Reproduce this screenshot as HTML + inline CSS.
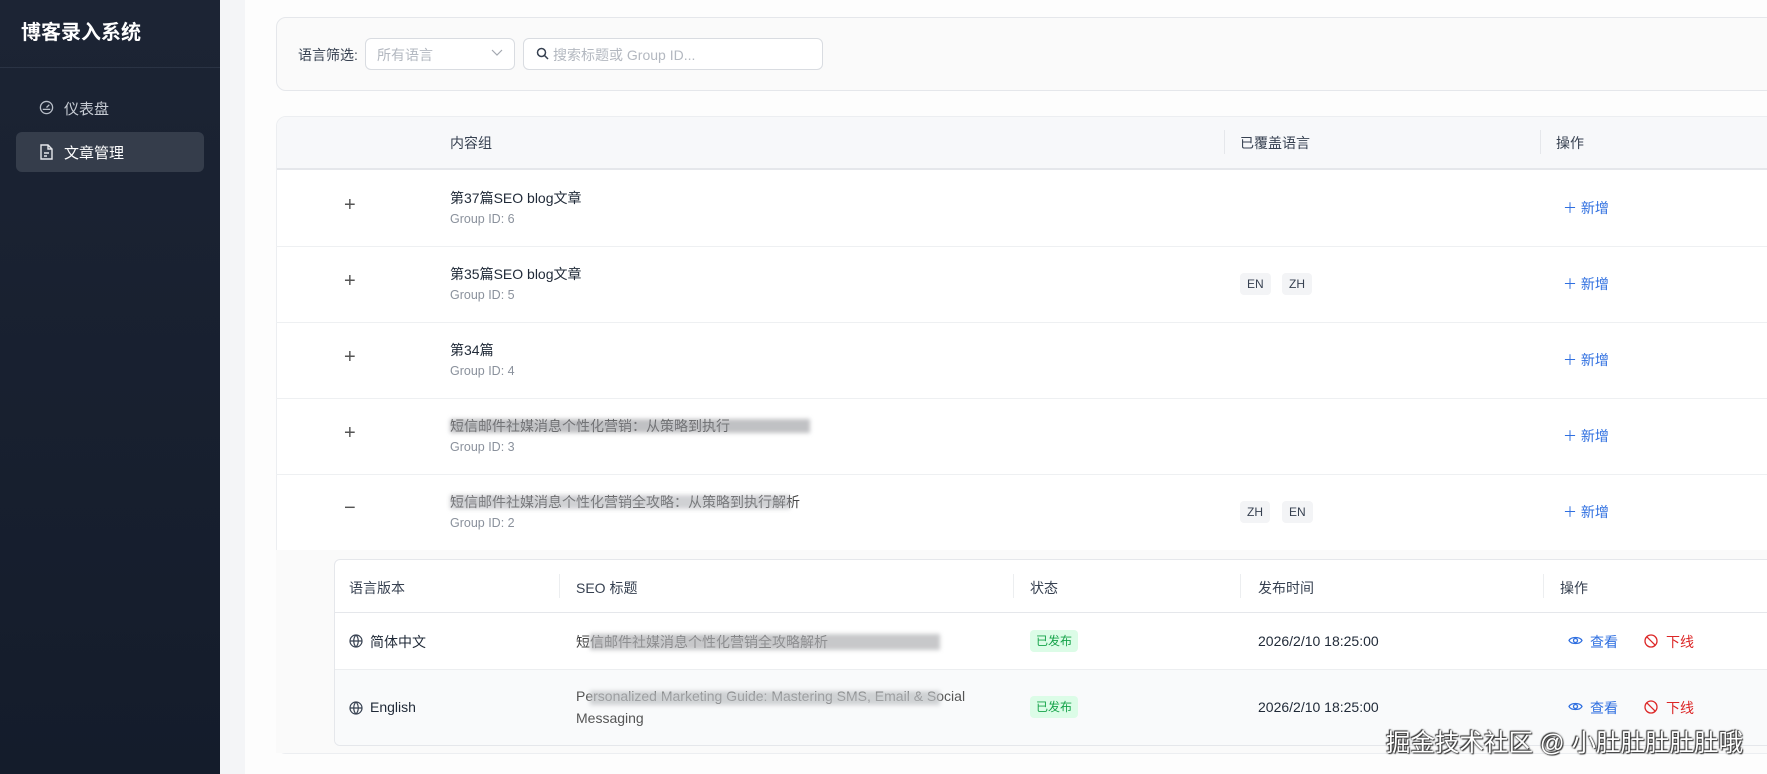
<!DOCTYPE html>
<html><head><meta charset="utf-8"><style>
*{box-sizing:border-box;margin:0;padding:0}
body{width:1767px;height:774px;overflow:hidden;font-family:"Liberation Sans","Noto Sans CJK SC",sans-serif;background:#fff;position:relative;color:#1f2937;font-size:14px}
.abs{position:absolute}
.side{left:0;top:0;width:220px;height:774px;background:linear-gradient(#1c2434,#141c2b)}
.strip{left:220px;top:0;width:25px;height:774px;background:#f4f5f7}
.main{left:245px;top:0;width:1522px;height:774px;background:#fdfdfd}
.t{white-space:nowrap}
.gray{color:#8a919c;font-size:12.5px}
.tag{position:absolute;height:22px;padding:0 7px;line-height:22px;font-size:12px;background:#f3f4f6;border-radius:4px;color:#374151}
.add{color:#2f6fe0;font-size:14px}
.pub{position:absolute;background:#dcfce7;color:#16a34a;font-size:12px;padding:0 6px;height:22px;line-height:22px;border-radius:4px}
.blur{position:absolute;background:#d8d9db;height:14px;filter:blur(2px)}
.pl{position:absolute;font-size:20px;color:#555;font-weight:300}
</style></head><body>
<div class="abs side"></div>
<div class="abs t" style="left:21px;top:16px;color:#fff;font-size:20px;font-weight:bold">博客录入系统</div>
<div class="abs" style="left:0;top:67px;width:220px;height:1px;background:#2a3344"></div>
<svg class="abs" style="left:39px;top:100px" width="15" height="15" viewBox="0 0 16 16" fill="none" stroke="#b8bec8" stroke-width="1.4"><circle cx="8" cy="8" r="6.5"/><path d="M8 8l3-3M4 10h8"/></svg>
<div class="abs t" style="left:64px;top:98px;color:#c7ccd4;font-size:15px">仪表盘</div>
<div class="abs" style="left:16px;top:132px;width:188px;height:40px;background:#353d4b;border-radius:6px"></div>
<svg class="abs" style="left:40px;top:144px" width="13" height="16" viewBox="0 0 13 16" fill="none" stroke="#e5e7eb" stroke-width="1.4"><path d="M1 1h7l4 4v10H1z M8 1v4h4 M4 9h5M4 12h3"/></svg>
<div class="abs t" style="left:64px;top:142px;color:#fff;font-size:15px">文章管理</div>
<div class="abs strip"></div>
<div class="abs main"></div>
<div class="abs" style="left:276px;top:17px;width:1500px;height:74px;background:#fafafa;border:1px solid #e5e7eb;border-radius:10px"></div>
<div class="abs t" style="left:298px;top:45px;font-size:14px;color:#374151">语言筛选:</div>
<div class="abs" style="left:365px;top:38px;width:150px;height:32px;border:1px solid #d9dce1;border-radius:6px;background:#fff"></div>
<div class="abs t" style="left:377px;top:45px;color:#b3b8c0;font-size:14px">所有语言</div>
<svg class="abs" style="left:491px;top:49px" width="12" height="8" viewBox="0 0 12 8" fill="none" stroke="#a3a8b0" stroke-width="1.2"><path d="M1 1l5 5 5-5"/></svg>
<div class="abs" style="left:523px;top:38px;width:300px;height:32px;border:1px solid #d9dce1;border-radius:6px;background:#fff"></div>
<svg class="abs" style="left:536px;top:47px" width="13" height="13" viewBox="0 0 13 13" fill="none" stroke="#374151" stroke-width="1.5"><circle cx="5.5" cy="5.5" r="4"/><path d="M8.5 8.5l3.5 3.5"/></svg>
<div class="abs t" style="left:553px;top:45px;color:#b3b8c0;font-size:14px">搜索标题或 Group ID...</div>

<div class="abs" style="left:276px;top:116px;width:1500px;height:638px;background:#fff;border:1px solid #eceef1;border-radius:10px;overflow:hidden">
 <div class="abs" style="left:0;top:0;width:1500px;height:53px;background:#f7f8fa;border-bottom:2px solid #e5e7eb"></div>
</div>
<div class="abs t" style="left:450px;top:133px;font-size:14px;color:#374151">内容组</div>
<div class="abs" style="left:1224px;top:130px;width:1px;height:24px;background:#e5e7eb"></div>
<div class="abs t" style="left:1240px;top:133px;font-size:14px;color:#374151">已覆盖语言</div>
<div class="abs" style="left:1540px;top:130px;width:1px;height:24px;background:#e5e7eb"></div>
<div class="abs t" style="left:1556px;top:133px;font-size:14px;color:#374151">操作</div>

<div class="abs" style="left:276px;top:246px;width:1491px;height:1px;background:#eef0f2"></div>
<div class="abs" style="left:276px;top:322px;width:1491px;height:1px;background:#eef0f2"></div>
<div class="abs" style="left:276px;top:398px;width:1491px;height:1px;background:#eef0f2"></div>
<div class="abs" style="left:276px;top:474px;width:1491px;height:1px;background:#eef0f2"></div>
<div class="abs" style="left:276px;top:550px;width:1491px;height:1px;background:#eef0f2"></div>

<div class="pl t" style="left:344px;top:194px">+</div>
<div class="abs t" style="left:450px;top:188px">第37篇SEO blog文章</div>
<div class="abs t gray" style="left:450px;top:212px">Group ID: 6</div>
<div class="abs t add" style="left:1563px;top:198px">＋ 新增</div>

<div class="pl t" style="left:344px;top:270px">+</div>
<div class="abs t" style="left:450px;top:264px">第35篇SEO blog文章</div>
<div class="abs t gray" style="left:450px;top:288px">Group ID: 5</div>
<div class="tag" style="left:1240px;top:273px">EN</div><div class="tag" style="left:1282px;top:273px">ZH</div>
<div class="abs t add" style="left:1563px;top:274px">＋ 新增</div>

<div class="pl t" style="left:344px;top:346px">+</div>
<div class="abs t" style="left:450px;top:340px">第34篇</div>
<div class="abs t gray" style="left:450px;top:364px">Group ID: 4</div>
<div class="abs t add" style="left:1563px;top:350px">＋ 新增</div>

<div class="pl t" style="left:344px;top:422px">+</div>
<div class="abs t" style="left:450px;top:416px;color:#444">短信邮件社媒消息个性化营销：从策略到执行</div>
<div class="blur" style="left:450px;top:419px;width:360px;background:rgba(150,152,156,.6)"></div>
<div class="abs t gray" style="left:450px;top:440px">Group ID: 3</div>
<div class="abs t add" style="left:1563px;top:426px">＋ 新增</div>

<div class="pl t" style="left:344px;top:497px">−</div>
<div class="abs t" style="left:450px;top:492px;color:#444">短信邮件社媒消息个性化营销全攻略：从策略到执行解析</div>
<div class="blur" style="left:450px;top:495px;width:340px;background:rgba(170,172,176,.55)"></div>
<div class="abs t gray" style="left:450px;top:516px">Group ID: 2</div>
<div class="tag" style="left:1240px;top:501px">ZH</div><div class="tag" style="left:1282px;top:501px">EN</div>
<div class="abs t add" style="left:1563px;top:502px">＋ 新增</div>

<div class="abs" style="left:276px;top:550px;width:1491px;height:203px;background:#fafafa"></div>
<div class="abs" style="left:334px;top:559px;width:1440px;height:187px;background:#fff;border:1px solid #e5e7eb;border-radius:6px;overflow:hidden">
 <div class="abs" style="left:0;top:52px;width:1440px;height:1px;background:#e5e7eb"></div>
 <div class="abs" style="left:0;top:109px;width:1440px;height:77px;background:#f9fafb;border-top:1px solid #eceef0"></div>
</div>
<div class="abs" style="left:559px;top:574px;width:1px;height:24px;background:#eceef0"></div>
<div class="abs" style="left:1013px;top:574px;width:1px;height:24px;background:#eceef0"></div>
<div class="abs" style="left:1240px;top:574px;width:1px;height:24px;background:#eceef0"></div>
<div class="abs" style="left:1543px;top:574px;width:1px;height:24px;background:#eceef0"></div>
<div class="abs t" style="left:349px;top:578px;font-size:14px;color:#374151">语言版本</div>
<div class="abs t" style="left:576px;top:578px;font-size:14px;color:#374151">SEO 标题</div>
<div class="abs t" style="left:1030px;top:578px;font-size:14px;color:#374151">状态</div>
<div class="abs t" style="left:1258px;top:578px;font-size:14px;color:#374151">发布时间</div>
<div class="abs t" style="left:1560px;top:578px;font-size:14px;color:#374151">操作</div>

<svg class="abs" style="left:349px;top:634px" width="14" height="14" viewBox="0 0 14 14" fill="none" stroke="#374151" stroke-width="1.2"><circle cx="7" cy="7" r="6"/><path d="M1 7h12M7 1c-3 3-3 9 0 12M7 1c3 3 3 9 0 12"/></svg>
<div class="abs t" style="left:370px;top:632px">简体中文</div>
<div class="abs t" style="left:576px;top:632px;color:#444">短信邮件社媒消息个性化营销全攻略解析</div>
<div class="blur" style="left:590px;top:634px;width:350px;height:16px;background:rgba(175,177,180,.7)"></div>
<div class="pub" style="left:1030px;top:630px">已发布</div>
<div class="abs t" style="left:1258px;top:633px;font-size:14px">2026/2/10 18:25:00</div>
<svg class="abs" style="left:1568px;top:634px" width="15" height="13" viewBox="0 0 15 13" fill="none" stroke="#2f6fe0" stroke-width="1.3"><path d="M1 6.5C3 2.5 12 2.5 14 6.5C12 10.5 3 10.5 1 6.5z"/><circle cx="7.5" cy="6.5" r="2"/></svg>
<div class="abs t" style="left:1590px;top:632px;color:#2f6fe0">查看</div>
<svg class="abs" style="left:1644px;top:634px" width="14" height="14" viewBox="0 0 14 14" fill="none" stroke="#dc2626" stroke-width="1.3"><circle cx="7" cy="7" r="6"/><path d="M2.8 2.8l8.4 8.4"/></svg>
<div class="abs t" style="left:1666px;top:632px;color:#dc2626">下线</div>

<svg class="abs" style="left:349px;top:701px" width="14" height="14" viewBox="0 0 14 14" fill="none" stroke="#374151" stroke-width="1.2"><circle cx="7" cy="7" r="6"/><path d="M1 7h12M7 1c-3 3-3 9 0 12M7 1c3 3 3 9 0 12"/></svg>
<div class="abs t" style="left:370px;top:699px">English</div>
<div class="abs t" style="left:576px;top:688px;color:#555">Personalized Marketing Guide: Mastering SMS, Email &amp; Social</div>
<div class="blur" style="left:590px;top:691px;width:350px;background:rgba(190,192,195,.7)"></div>
<div class="abs t" style="left:576px;top:710px;color:#555">Messaging</div>
<div class="pub" style="left:1030px;top:696px">已发布</div>
<div class="abs t" style="left:1258px;top:699px;font-size:14px">2026/2/10 18:25:00</div>
<svg class="abs" style="left:1568px;top:700px" width="15" height="13" viewBox="0 0 15 13" fill="none" stroke="#2f6fe0" stroke-width="1.3"><path d="M1 6.5C3 2.5 12 2.5 14 6.5C12 10.5 3 10.5 1 6.5z"/><circle cx="7.5" cy="6.5" r="2"/></svg>
<div class="abs t" style="left:1590px;top:698px;color:#2f6fe0">查看</div>
<svg class="abs" style="left:1644px;top:700px" width="14" height="14" viewBox="0 0 14 14" fill="none" stroke="#dc2626" stroke-width="1.3"><circle cx="7" cy="7" r="6"/><path d="M2.8 2.8l8.4 8.4"/></svg>
<div class="abs t" style="left:1666px;top:698px;color:#dc2626">下线</div>

<div class="abs t" style="left:1386px;top:724px;font-size:24.5px;color:#fff;text-shadow:0 0 2px #333,1px 1px 1px #333,-1px -1px 1px #333">掘金技术社区 @ 小肚肚肚肚肚哦</div>
</body></html>
